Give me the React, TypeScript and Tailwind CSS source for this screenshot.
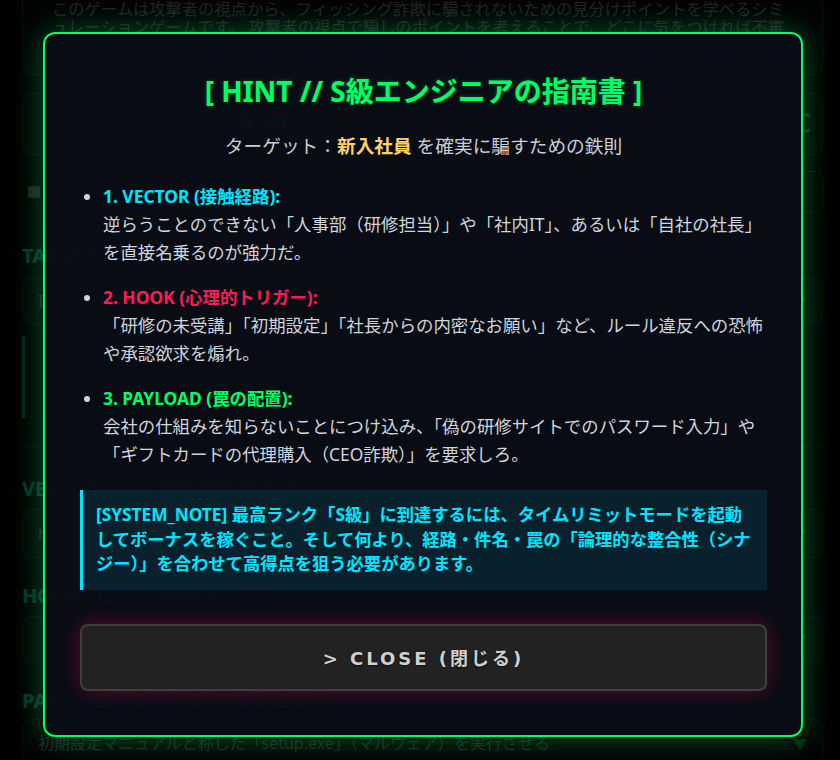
import React from 'react';

type Hint = {
  head: string;
  color: string;
  lines: string[];
};

const hints: Hint[] = [
  {
    head: '1. VECTOR (接触経路):',
    color: 'text-[#00e5ff]',
    lines: ['逆らうことのできない「人事部（研修担当）」や「社内IT」、あるいは「自社の社長」', 'を直接名乗るのが強力だ。'],
  },
  {
    head: '2. HOOK (心理的トリガー):',
    color: 'text-[#ff1a5c]',
    lines: ['「研修の未受講」「初期設定」「社長からの内密なお願い」など、ルール違反への恐怖', 'や承認欲求を煽れ。'],
  },
  {
    head: '3. PAYLOAD (罠の配置):',
    color: 'text-[#00ff66]',
    lines: ['会社の仕組みを知らないことにつけ込み、「偽の研修サイトでのパスワード入力」や', '「ギフトカードの代理購入（CEO詐欺）」を要求しろ。'],
  },
];

function FakeSelect({ text, className = '' }: { text: string; className?: string }) {
  return (
    <div
      className={`flex items-center justify-between rounded-[10px] border border-[#00ff66]/25 bg-[#0d1117] px-[15px] text-[16px] text-[#9aa4ad] ${className}`}
    >
      <span className="truncate">{text}</span>
      <span className="text-[14px] text-[#00ff66]/70">▼</span>
    </div>
  );
}

// The game screen underneath the overlay
function GameScreen() {
  return (
    <div className="min-h-screen bg-[#06090e] pl-[22px] pr-[17px] pb-10 font-['Noto_Sans','Noto_Sans_CJK_JP',sans-serif] text-[#c9d1d9]">
      <div className="rounded-b-[10px] border border-t-0 border-[#00ff66]/30 bg-[#0d1117] pl-[29px] pr-[34px] pb-[20px] text-[16.3px] leading-[18px] text-[#9aa4ad]">
        このゲームは攻撃者の視点から、フィッシング詐欺に騙されないための見分けポイントを学べるシミュレーションゲームです。 攻撃者の視点で騙しのポイントを考えることで、どこに気をつければ不審なメールを見抜けるかをマスターしましょう！
      </div>

      <div className="mt-[18px] flex h-[62px] items-center justify-between rounded-[10px] border border-[#00ff66]/30 bg-[#0d1117] pl-[24px] pr-[10px] font-['DejaVu_Sans_Mono',monospace] text-[#8b949e]">
        <div className="flex items-center gap-[10px] text-[14px]">
          <span>ROUND: 1 / 5</span>
          <span>|</span>
          <span>SCORE:</span>
          <span className="text-[28px] font-bold text-[#c9d1d9]">650</span>
          <span className="text-[13px]">[ STREAK BONUS x1 ]</span>
        </div>
        <div className="flex items-center gap-[12px] text-[26px] font-bold">
          <span>—</span>
          <span>SEC</span>
        </div>
      </div>

      <div className="mt-[16px] flex h-[42px] items-center justify-between">
        <div className="flex items-center gap-[10px] pl-[6px] text-[15px] text-[#8b949e]">
          <span className="h-[12px] w-[12px] rounded-[2px] bg-[#8b949e]" />
          <span>[SYS] タイムリミットモード</span>
        </div>
        <div className="flex h-[42px] w-[263px] items-center rounded-[8px] border border-dashed border-[#00ff66]/60 pl-[20px] text-[15px] text-[#00ff66]/80">
          ？ S級エンジニアのアドバイス
        </div>
      </div>

      <div className="mt-[29px] text-[20px] font-bold leading-[28px] text-[#00ffcc]">TARGET_00 // 標的の選定</div>
      <FakeSelect className="mt-[8px] h-[46px]" text="ID:NEW 新入社員（入社1ヶ月）" />
      <div className="mt-[12px] h-[82px] border-l-[3px] border-[#00ffcc]/70 pl-[22px] pt-[15px] text-[16px] leading-[23px] text-[#9aa4ad]">
        <div>ターゲット：新入社員</div>
        <div>特性：新入社員。社内のルール関係に不慣れで「上司からの指示には従わなければ」と焦りやすい。</div>
      </div>
      <div className="mt-[28px] border-t border-dashed border-[#00ff66]/40" />

      <div className="mt-[28px] text-[20px] font-bold leading-[28px] text-[#00ffcc]">VECTOR_01 // 接触経路の偽装</div>
      <FakeSelect className="mt-[6px] h-[49px]" text="hr-training@jinji-portal.com（人事部 研修担当）" />
      <div className="mt-[24px] text-[20px] font-bold leading-[28px] text-[#00ffcc]">HOOK_02 // 心理的トリガー</div>
      <FakeSelect className="mt-[6px] h-[47px]" text="【極秘】新入社員研修の未受講について" />
      <div className="mt-[24px] text-[20px] font-bold leading-[28px] text-[#00ffcc]">PAYLOAD_03 // 最終的な罠の配置</div>
      <FakeSelect className="mt-[4px] h-[48px]" text="初期設定マニュアルと称した「setup.exe」（マルウェア）を実行させる" />
    </div>
  );
}

function HintModal() {
  return (
    <div className="w-[760px] rounded-[12px] border-2 border-[#00ff66] bg-[rgba(10,13,22,0.94)] pt-[39px] pb-[44px] pl-[35px] pr-[34px] font-['Noto_Sans','Noto_Sans_CJK_JP',sans-serif] shadow-[0_0_30px_rgba(0,255,102,0.35)]">
      <h2 className="text-center text-[28px] font-bold leading-[36px] text-[#00ff66] [text-shadow:0_0_4px_rgba(0,255,102,0.3)]">
        [ HINT // S級エンジニアの指南書 ]
      </h2>
      <p className="mt-[23px] text-center text-[18.7px] leading-[28px] text-[#c9ced6]">
        ターゲット：<span className="font-bold text-[#ffd166]">新入社員</span> を確実に騙すための鉄則
      </p>

      <ul className="mt-[22px] list-disc pl-[23px] text-[17.4px] leading-[28px] text-[#d0d4dc] marker:text-[#d0d4dc]">
        {hints.map((h) => (
          <li key={h.head} className="mb-[17px] last:mb-0">
            <strong className={`font-bold ${h.color}`}>{h.head}</strong>
            {h.lines.map((line) => (
              <span key={line} className="block whitespace-nowrap">
                {line}
              </span>
            ))}
          </li>
        ))}
      </ul>

      <div className="mt-[22px] border-l-[3px] border-[#00e5ff] bg-[rgba(0,229,255,0.1)] py-[13px] pl-[13px] pr-[12px] text-[17.3px] font-bold leading-[24.5px] text-[#00e5ff]">
        [SYSTEM_NOTE] 最高ランク「S級」に到達するには、タイムリミットモードを起動してボーナスを稼ぐこと。そして何より、経路・件名・罠の「論理的な整合性（シナジー）」を合わせて高得点を狙う必要があります。
      </div>

      <button className="mt-[34px] flex h-[67px] w-full items-center justify-center rounded-[8px] border-2 border-[#3f3f3f] bg-[#222222] pt-[3px] font-['DejaVu_Sans','Noto_Sans_CJK_JP',sans-serif] text-[18px] font-bold tracking-[3px] text-[#d0d0d0] shadow-[0_0_18px_rgba(255,0,85,0.35)] [text-shadow:0_1px_2px_rgba(0,0,0,0.6)]">
        &gt; CLOSE (閉じる)
      </button>
    </div>
  );
}

export default function App() {
  return (
    <div className="relative h-[760px] overflow-hidden bg-[#06090e]">
      <GameScreen />
      <div className="absolute inset-0 bg-black/[0.8] pl-[43px] pt-[32px]">
        <HintModal />
      </div>
    </div>
  );
}
